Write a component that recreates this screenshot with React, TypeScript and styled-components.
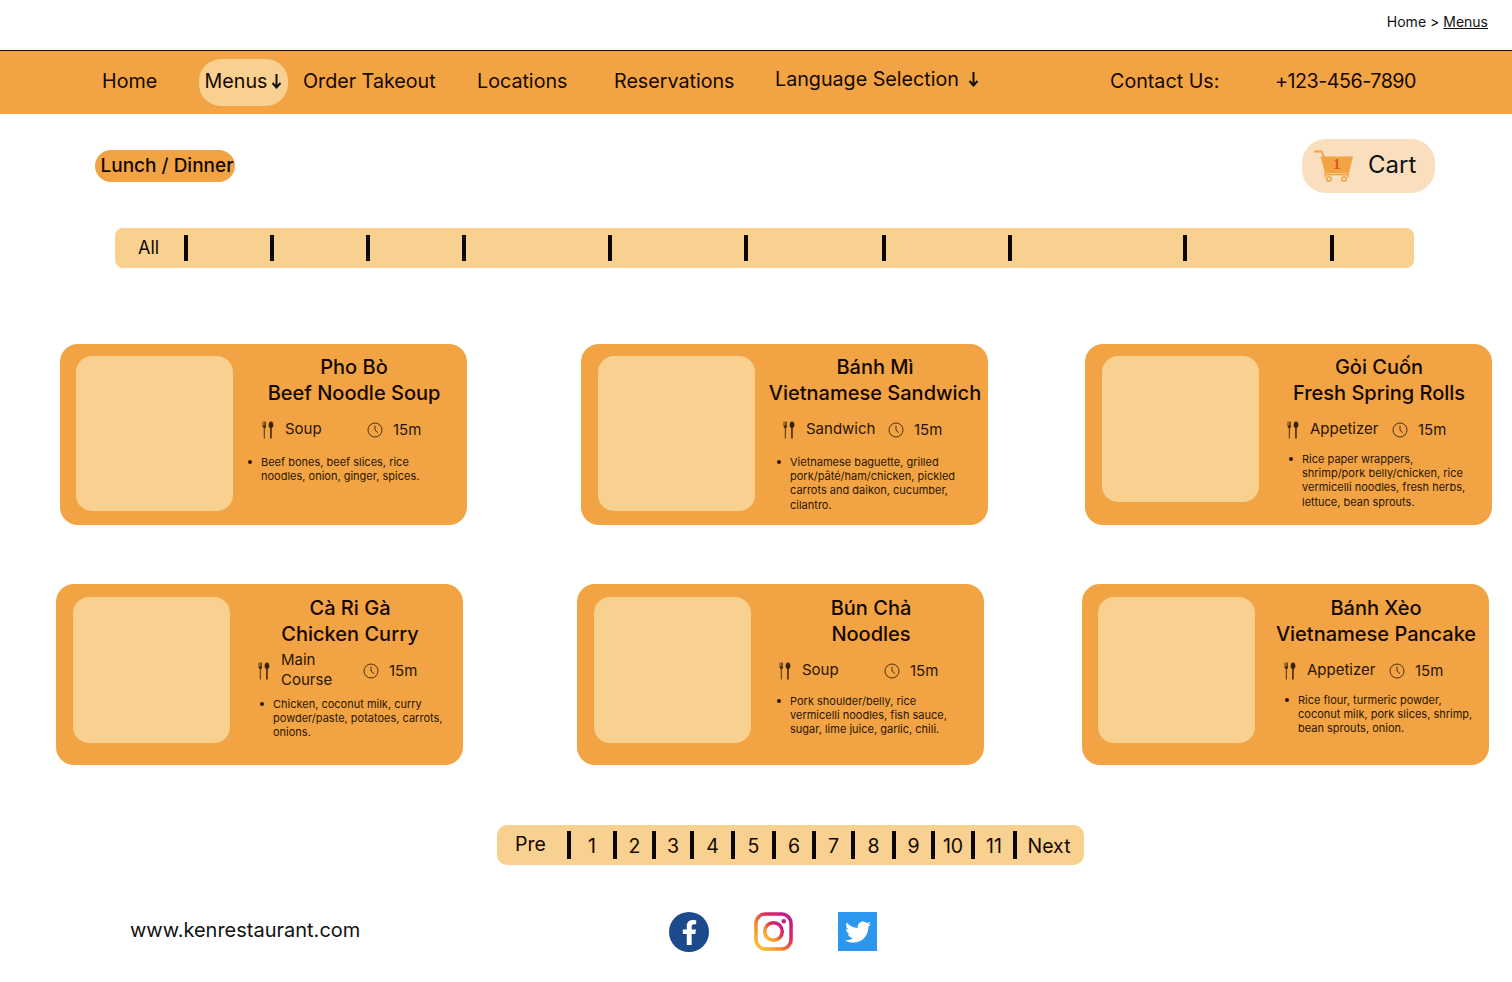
import React from "react";
import styled, { createGlobalStyle } from "styled-components";
import { FaFacebookF, FaTwitter } from "react-icons/fa";

const navItems = [
  { label: "Home", width: 97 },
  { label: "Menus", width: 104, active: true },
  { label: "Order Takeout", width: 174 },
  { label: "Locations", width: 137 },
  { label: "Reservations", width: 161 },
  { label: "Language Selection", width: 335, arrow: true, lift: true },
  { label: "Contact Us:", width: 165 },
  { label: "+123-456-7890", width: 160, tight: true },
];

// distance from each divider to the one after it
const filterGaps = [86, 96, 96, 146, 136, 138, 126, 175, 147];

const pages = [
  { label: "1", width: 46 },
  { label: "2", width: 39 },
  { label: "3", width: 38 },
  { label: "4", width: 41 },
  { label: "5", width: 41 },
  { label: "6", width: 40 },
  { label: "7", width: 39 },
  { label: "8", width: 41 },
  { label: "9", width: 39 },
  { label: "10", width: 40 },
  { label: "11", width: 42 },
];

const rows = [
  {
    left: 60,
    top: 10,
    gaps: [0, 114, 97],
    cards: [
      {
        title: ["Pho Bò", "Beef Noodle Soup"],
        category: ["Soup"],
        imageLeft: 16,
        imageHeight: 155,
        listTop: 12,
        indent: 8,
        body: ["Beef bones, beef slices, rice", "noodles, onion, ginger, spices."],
      },
      {
        title: ["Bánh Mì", "Vietnamese Sandwich"],
        category: ["Sandwich"],
        imageLeft: 17,
        imageHeight: 155,
        listTop: 12,
        indent: 16,
        body: ["Vietnamese baguette, grilled", "pork/pâté/ham/chicken, pickled", "carrots and daikon, cucumber,", "cilantro."],
      },
      {
        title: ["Gỏi Cuốn", "Fresh Spring Rolls"],
        category: ["Appetizer"],
        imageLeft: 17,
        imageHeight: 146,
        listTop: 9,
        indent: 24,
        body: ["Rice paper wrappers,", "shrimp/pork belly/chicken, rice", "vermicelli noodles, fresh herbs,", "lettuce, bean sprouts."],
      },
    ],
  },
  {
    left: 56,
    top: 11,
    gaps: [0, 114, 98],
    cards: [
      {
        title: ["Cà Ri Gà", "Chicken Curry"],
        category: ["Main", "Course"],
        imageLeft: 17,
        imageHeight: 146,
        listTop: 13,
        indent: 24,
        body: ["Chicken, coconut milk, curry", "powder/paste, potatoes, carrots,", "onions."],
      },
      {
        title: ["Bún Chả", "Noodles"],
        category: ["Soup"],
        imageLeft: 17,
        imageHeight: 146,
        listTop: 10,
        indent: 20,
        body: ["Pork shoulder/belly, rice", "vermicelli noodles, fish sauce,", "sugar, lime juice, garlic, chili."],
      },
      {
        title: ["Bánh Xèo", "Vietnamese Pancake"],
        category: ["Appetizer"],
        imageLeft: 16,
        imageHeight: 146,
        listTop: 9,
        indent: 23,
        body: ["Rice flour, turmeric powder,", "coconut milk, pork slices, shrimp,", "bean sprouts, onion."],
      },
    ],
  },
];

const ArrowDown = () => (
  <svg width="11" height="16" viewBox="0 0 11 16" fill="none" stroke="#111" strokeWidth="2">
    <path d="M5.5 1v13M1.5 10l4 4.5 4-4.5" />
  </svg>
);

const Cutlery = () => (
  <svg width="12" height="18" viewBox="0 0 12 18" fill="#3a2208">
    <path d="M0.6 0.5h.7v4h.6v-4h.7v4h.6v-4h.7v5c0 1-.6 1.5-1.2 1.7V17.5H1.8V6.7C1.1 6.5.6 6 .6 5z" />
    <path d="M9 .4c1.5 0 2.4 1.7 2.4 3.5 0 1.500-.7 2.700-1.700 3V17.500H8.200V6.900C7.200 6.600 6.600 5.400 6.600 3.900 6.600 2.100 7.500.4 9 .4z" />
  </svg>
);

const Clock = () => (
  <svg width="16" height="16" viewBox="0 0 16 16" fill="none" stroke="#3a2208" strokeWidth="0.9">
    <circle cx="8" cy="8" r="7" />
    <path d="M8 3.600V8l3 2.800" />
  </svg>
);

const CartIcon = () => (
  <svg width="40" height="32" viewBox="0 0 40 32">
    <path d="M1 1.500h6.500L11 9" fill="none" stroke="#f2a444" strokeWidth="1.800" strokeLinecap="round" />
    <path d="M6.500 6.500H39L35 23H11z" fill="#f2a444" />
    <path d="M11 24.500h23" stroke="#f2a444" strokeWidth="1.800" />
    <path d="M11 23v4.500M34 23v4.500" stroke="#f2a444" strokeWidth="1.500" />
    <circle cx="15" cy="29" r="2.200" fill="none" stroke="#f2a444" strokeWidth="1.500" />
    <circle cx="30" cy="29" r="2.200" fill="none" stroke="#f2a444" strokeWidth="1.500" />
  </svg>
);

const InstagramIcon = () => (
  <svg width="39" height="39" viewBox="0 0 40 40" fill="none">
    <defs>
      <linearGradient id="ig" x1="0" y1="1" x2="1" y2="0">
        <stop offset="0" stopColor="#fdc936" />
        <stop offset="0.35" stopColor="#f58a2c" />
        <stop offset="0.65" stopColor="#dd2a5b" />
        <stop offset="1" stopColor="#b5179e" />
      </linearGradient>
    </defs>
    <rect x="2" y="2" width="36" height="36" rx="10" stroke="url(#ig)" strokeWidth="3.600" />
    <circle cx="20" cy="20" r="9" stroke="url(#ig)" strokeWidth="3.600" />
    <circle cx="30.500" cy="9.500" r="2.300" fill="#c0217f" />
  </svg>
);

const App: React.FC = () => {
  return (
    <>
      <GlobalStyle />
      <Crumbs>
        Home &gt; <u>Menus</u>
      </Crumbs>

      <NavBar>
        {navItems.map((item) => (
          <NavCell key={item.label} $width={item.width}>
            {item.active ? (
              <ActivePill>
                {item.label}
                <ArrowDown />
              </ActivePill>
            ) : (
              <NavLabel $lift={item.lift} $tight={item.tight}>
                {item.label}
                {item.arrow && <ArrowDown />}
              </NavLabel>
            )}
          </NavCell>
        ))}
      </NavBar>

      <Toolbar>
        <MealPill>Lunch / Dinner</MealPill>
        <CartPill>
          <CartGlyph>
            <CartIcon />
            <CartCount>1</CartCount>
          </CartGlyph>
          <CartLabel>Cart</CartLabel>
        </CartPill>
      </Toolbar>

      <FilterBar>
        <FilterAll>All</FilterAll>
        {filterGaps.map((gap, i) => (
          <FilterTick key={i} $gap={gap} />
        ))}
        <FilterTick $gap={0} />
      </FilterBar>

      <Rows>
        {rows.map((row, r) => (
          <CardRow key={r} $left={row.left}>
            {row.cards.map((card, c) => (
              <Card key={card.title[0]} $gap={row.gaps[c]} $top={row.top}>
                <ImageSlot $height={card.imageHeight} $left={card.imageLeft} />
                <Info>
                  <Title>
                    {card.title[0]}
                    <br />
                    {card.title[1]}
                  </Title>
                  <Meta>
                    <Cutlery />
                    <Category $tall={card.category.length > 1}>
                      {card.category.map((word) => (
                        <div key={word}>{word}</div>
                      ))}
                    </Category>
                    <Clock />
                    <Time>15m</Time>
                  </Meta>
                  <Ingredients $top={card.listTop} $indent={card.indent}>
                    <li>
                      {card.body.map((line) => (
                        <div key={line}>{line}</div>
                      ))}
                    </li>
                  </Ingredients>
                </Info>
              </Card>
            ))}
          </CardRow>
        ))}
      </Rows>

      <Pager>
        <PagerEnd $width={70}>Pre</PagerEnd>
        <PagerTick />
        {pages.map((p) => (
          <React.Fragment key={p.label}>
            <PagerCell $width={p.width - 4}>{p.label}</PagerCell>
            <PagerTick />
          </React.Fragment>
        ))}
        <PagerCell $width={64}>Next</PagerCell>
      </Pager>

      <Footer>
        <Site>www.kenrestaurant.com</Site>
        <Socials>
          <Facebook>
            <FaFacebookF size={25} />
          </Facebook>
          <InstagramIcon />
          <Twitter>
            <FaTwitter size={26} />
          </Twitter>
        </Socials>
      </Footer>
    </>
  );
};

export default App;

/* ------------------- Styled Components ------------------- */
const GlobalStyle = createGlobalStyle`
  html, body {
    margin: 0;
    background: #fff;
    overflow: hidden;
  }
  body {
    font-family: Inter, "Noto Sans", sans-serif;
    color: #140800;
  }
`;

const Crumbs = styled.div`
  height: 50px;
  display: flex;
  align-items: center;
  justify-content: flex-end;
  gap: 4px;
  padding: 0 24px 8px 0;
  box-sizing: border-box;
  font-size: 14px;
  color: #111;
`;

const NavBar = styled.nav`
  height: 64px;
  box-sizing: border-box;
  border-top: 1px solid #111;
  background: #f2a444;
  display: flex;
  align-items: center;
  padding-left: 102px;
  font-size: 19.7px;
`;

const NavCell = styled.div<{ $width: number }>`
  width: ${(p) => p.$width}px;
  flex: none;
  white-space: nowrap;
`;

const NavLabel = styled.span<{ $lift?: boolean; $tight?: boolean }>`
  display: inline-flex;
  align-items: center;
  gap: 9px;
  margin-bottom: ${(p) => (p.$lift ? 8 : 4)}px;
  letter-spacing: ${(p) => (p.$tight ? "-0.5px" : "0")};
`;

const ActivePill = styled.div`
  width: 89px;
  height: 47px;
  box-sizing: border-box;
  padding-bottom: 3px;
  display: flex;
  align-items: center;
  justify-content: center;
  gap: 4px;
  border-radius: 22px;
  background: #f8d08f;
`;

const Toolbar = styled.div`
  display: flex;
  align-items: center;
  justify-content: space-between;
  padding: 25px 77px 0 95px;
`;

const MealPill = styled.div`
  width: 140px;
  height: 32px;
  box-sizing: border-box;
  padding: 0 0 2px 4px;
  display: flex;
  align-items: center;
  justify-content: center;
  border-radius: 16px;
  background: #f2a444;
  font-size: 19px;
  font-weight: 500;
  white-space: nowrap;
`;

const CartPill = styled.div`
  width: 133px;
  height: 54px;
  box-sizing: border-box;
  padding-left: 12px;
  display: flex;
  align-items: center;
  gap: 14px;
  border-radius: 24px;
  background: #f9dfbe;
  font-size: 24px;
  color: #111;
`;

const CartLabel = styled.span`
  margin-bottom: 3px;
`;

const CartGlyph = styled.div`
  position: relative;
  display: flex;
`;

const CartCount = styled.span`
  position: absolute;
  top: 6px;
  left: 19px;
  font-family: "Liberation Serif", serif;
  font-size: 15px;
  font-weight: 700;
  color: #e8502a;
`;

const FilterBar = styled.div`
  width: 1299px;
  height: 40px;
  margin: 35px 0 0 115px;
  box-sizing: border-box;
  padding-left: 23px;
  display: flex;
  align-items: center;
  border-radius: 8px;
  background: #f8d08f;
  font-size: 18px;
`;

const FilterAll = styled.div`
  width: 46px;
  margin-bottom: 1px;
`;

const FilterTick = styled.div<{ $gap: number }>`
  width: 4px;
  height: 26px;
  flex: none;
  margin-right: ${(p) => Math.max(p.$gap - 4, 0)}px;
  background: #0c0602;
`;

const Rows = styled.div`
  margin-top: 76px;
  display: flex;
  flex-direction: column;
  gap: 59px;
`;

const CardRow = styled.div<{ $left: number }>`
  display: flex;
  padding-left: ${(p) => p.$left}px;
`;

const Card = styled.article<{ $gap: number; $top: number }>`
  width: 407px;
  height: 181px;
  flex: none;
  margin-left: ${(p) => p.$gap}px;
  box-sizing: border-box;
  padding-top: ${(p) => p.$top}px;
  display: flex;
  border-radius: 18px;
  background: #f2a444;
`;

const ImageSlot = styled.div<{ $height: number; $left: number }>`
  width: 157px;
  height: ${(p) => p.$height}px;
  margin: 2px ${(p) => 24 - p.$left}px 0 ${(p) => p.$left}px;
  flex: none;
  border-radius: 16px;
  background: #f8d08f;
`;

const Info = styled.div`
  width: 226px;
  flex: none;
`;

const Title = styled.h3`
  margin: 0;
  width: 226px;
  font-size: 20px;
  line-height: 26px;
  font-weight: 500;
  text-align: center;
  white-space: nowrap;
`;

const Meta = styled.div`
  height: 26px;
  margin-top: 11px;
  padding-left: 21px;
  display: grid;
  grid-template-columns: 23px 82px 26px auto;
  grid-template-rows: 26px;
  align-items: center;
  font-size: 15px;
  color: #2a1503;
`;

const Category = styled.div<{ $tall: boolean }>`
  line-height: ${(p) => (p.$tall ? 20 : 18)}px;
  margin-top: -2px;
`;

const Time = styled.div`
  line-height: 18px;
`;

const Ingredients = styled.ul<{ $top: number; $indent: number }>`
  list-style: none;
  margin: ${(p) => p.$top}px 0 0;
  padding: 0 0 0 ${(p) => p.$indent + 12}px;
  font-size: 11px;
  line-height: 14.2px;
  color: #2a1503;
  white-space: nowrap;

  li {
    position: relative;
  }

  li::before {
    content: "";
    position: absolute;
    left: -13px;
    top: 5px;
    width: 4px;
    height: 4px;
    border-radius: 50%;
    background: #2a1503;
  }
`;

const Pager = styled.div`
  width: 587px;
  height: 40px;
  margin: 60px 0 0 497px;
  display: flex;
  align-items: center;
  border-radius: 10px;
  background: #f8d08f;
  font-size: 19.5px;
`;

const PagerEnd = styled.div<{ $width: number }>`
  width: ${(p) => p.$width}px;
  box-sizing: border-box;
  padding-left: 18px;
  margin-bottom: 2px;
`;

const PagerCell = styled.div<{ $width: number }>`
  width: ${(p) => p.$width}px;
  flex: none;
  text-align: center;
  margin-top: 2px;
`;

const PagerTick = styled.div`
  width: 4px;
  height: 28px;
  flex: none;
  background: #0c0602;
`;

const Footer = styled.footer`
  margin-top: 47px;
  padding-left: 130px;
  display: flex;
  align-items: center;
`;

const Site = styled.div`
  width: 539px;
  margin-bottom: 5px;
  font-size: 20px;
  color: #111;
`;

const Socials = styled.div`
  display: flex;
  align-items: flex-start;
  gap: 45px;
`;

const Facebook = styled.div`
  width: 40px;
  height: 40px;
  display: flex;
  align-items: center;
  justify-content: center;
  border-radius: 50%;
  background: #1c4a8c;
  color: #fff;
`;

const Twitter = styled.div`
  width: 39px;
  height: 39px;
  display: flex;
  align-items: center;
  justify-content: center;
  background: #2b97ee;
  color: #fff;
`;
